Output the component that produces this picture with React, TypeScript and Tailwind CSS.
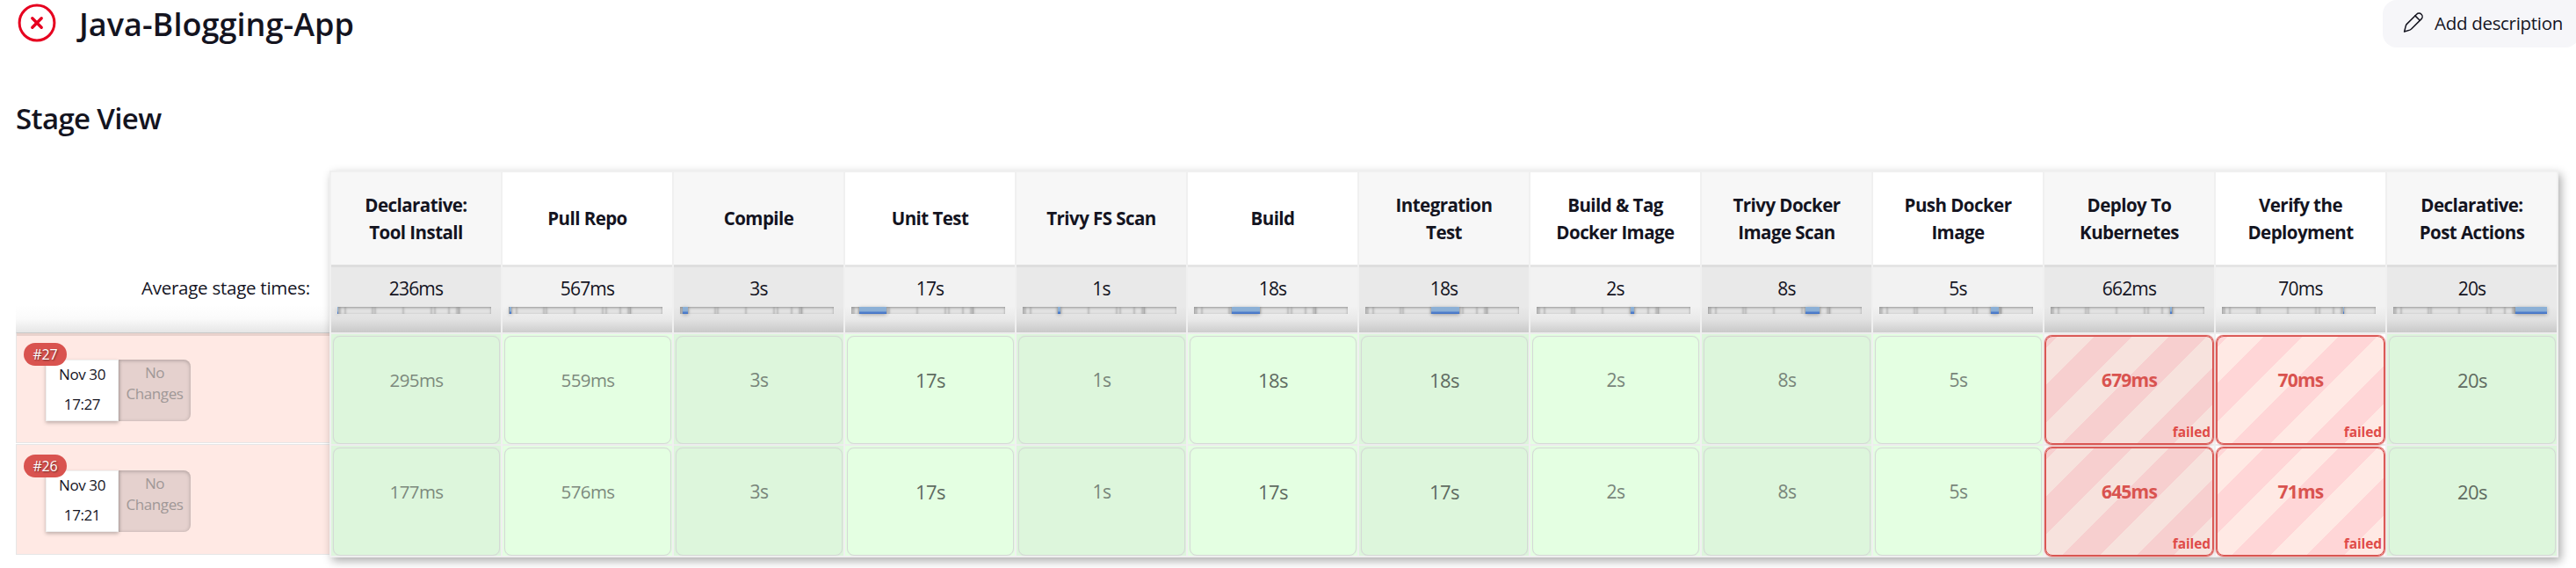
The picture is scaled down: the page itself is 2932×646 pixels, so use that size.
type Stage = { name: string[]; average: string; width: number };

const STAGES: Stage[] = [
  { name: ["Declarative:", "Tool Install"], average: "236ms", width: 1 },
  { name: ["Pull Repo"], average: "567ms", width: 2 },
  { name: ["Compile"], average: "3s", width: 6 },
  { name: ["Unit Test"], average: "17s", width: 31 },
  { name: ["Trivy FS Scan"], average: "1s", width: 3 },
  { name: ["Build"], average: "18s", width: 32 },
  { name: ["Integration", "Test"], average: "18s", width: 32 },
  { name: ["Build & Tag", "Docker Image"], average: "2s", width: 4 },
  { name: ["Trivy Docker", "Image Scan"], average: "8s", width: 16 },
  { name: ["Push Docker", "Image"], average: "5s", width: 9 },
  { name: ["Deploy To", "Kubernetes"], average: "662ms", width: 2 },
  { name: ["Verify the", "Deployment"], average: "70ms", width: 1 },
  { name: ["Declarative:", "Post Actions"], average: "20s", width: 36 },
];

type Run = { id: string; date: string; time: string; durations: string[] };

const RUNS: Run[] = [
  {
    id: "#27",
    date: "Nov 30",
    time: "17:27",
    durations: ["295ms", "559ms", "3s", "17s", "1s", "18s", "18s", "2s", "8s", "5s", "679ms", "70ms", "20s"],
  },
  {
    id: "#26",
    date: "Nov 30",
    time: "17:21",
    durations: ["177ms", "576ms", "3s", "17s", "1s", "17s", "17s", "2s", "8s", "5s", "645ms", "71ms", "20s"],
  },
];

const FAILED = [10, 11];

function FailedIcon() {
  return (
    <svg width="44" height="44" viewBox="0 0 44 44" fill="none" stroke="#e6001f" strokeWidth="3" className="shrink-0">
      <circle cx="22" cy="22" r="19.9" />
      <path d="M16.8 16.8l10.4 10.4M27.2 16.8L16.8 27.2" strokeWidth="3.4" strokeLinecap="round" />
    </svg>
  );
}

function PencilIcon() {
  return (
    <svg width="26" height="26" viewBox="0 0 26 26" fill="none" stroke="#14141f" strokeWidth="1.5" strokeLinejoin="round" strokeLinecap="round" className="shrink-0">
      <path d="M2.6 23l1.7-6.6q.3-1.2 1.1-2L16.6 3.2a3.8 3.8 0 0 1 5.4 5.4L10.8 19.8q-.8.8-2 1.3Z" />
      <path d="M14.9 4.9l5.4 5.4" />
    </svg>
  );
}

function TimeBar({ active }: { active: number }) {
  return (
    <div className="flex h-2 w-[175px] bg-[#e2e2e2]">
      {STAGES.map((stage, i) => (
        <div
          key={i}
          style={{ width: stage.width }}
          className={
            i === active
              ? "relative h-2 shrink-0 bg-linear-to-b from-[#8cb0d6] from-55% to-[#4676c8] to-85% shadow-[0_1px_4px_rgba(0,0,0,0.3)]"
              : "h-2 shrink-0 shadow-[inset_0_1px_3px_rgba(0,0,0,0.35)]"
          }
        />
      ))}
    </div>
  );
}

function Duration({ text }: { text: string }) {
  if (text.endsWith("ms")) return <span className="text-[20.5px] tracking-[-0.6px] text-[#7c897d]">{text}</span>;
  if (text.length > 2) return <span className="text-[22px] tracking-[-0.5px] text-[#5f6b61]">{text}</span>;
  return <span className="text-[21px] tracking-[-0.5px] text-[#78857a]">{text}</span>;
}

function StageCell({ text, column }: { text: string; column: number }) {
  const odd = column % 2 === 0;
  if (FAILED.includes(column)) {
    return (
      <div className={`h-[125px] pt-0.5 pr-px pl-px ${odd ? "bg-[#f7f7f7]" : "bg-white"}`}>
        <div
          className={`relative flex h-[123px] items-start justify-center rounded-lg border border-[#d9534f] pt-[34px] shadow-[0_0_1px_0.5px_#d9534f,0_1px_3px_rgba(217,83,79,0.6)] ${
            odd
              ? "bg-[repeating-linear-gradient(135deg,#f7cfcf_0_8.7px,#f7e2dd_8.7px_38.7px,#f7cfcf_38.7px_60px)]"
              : "bg-[repeating-linear-gradient(135deg,#ffd6d7_0_8px,#ffe9e4_8px_37px,#ffd6d7_37px_60px)]"
          }`}
        >
          <span className="text-[21px] leading-[31px] font-bold tracking-[-0.8px] text-[#d9534f]">{text}</span>
          <span className="absolute right-0.5 bottom-[3px] text-[15.5px] leading-[20px] font-bold tracking-[-0.1px] text-[#df4b48]">failed</span>
        </div>
      </div>
    );
  }
  return (
    <div className={`h-[125px] pt-0.5 pr-px pl-0.5 ${odd ? "bg-[#ddf6dc]" : "bg-[#e4ffe2]"}`}>
      <div className="flex h-[123px] items-start justify-center rounded-lg border border-[#d5d9d6] pt-[34px] leading-[31px] shadow-[0_0_1px_#cfcfd4]">
        <Duration text={text} />
      </div>
    </div>
  );
}

function RunLabel({ run, first }: { run: Run; first: boolean }) {
  return (
    <div
      className={`relative h-[126px] border-b border-l border-[#e6e6e6] bg-[#ffe9e4] pl-[33px] ${
        first ? "border-t border-t-[#c9c9c9] pt-[30px] shadow-[inset_0_3px_0_#e9d2cc]" : "border-t pt-[29px]"
      }`}
    >
      <div className="flex h-[70px]">
        <div className="relative flex w-[83px] flex-col border border-[#efefef] bg-white text-center text-[17px] tracking-[-0.4px] text-[#14141f] shadow-[0_2px_4px_rgba(0,0,0,0.25)]">
          <div className="leading-[31px]">{run.date}</div>
          <div className="leading-[37px]">{run.time}</div>
        </div>
        <div className="w-[82px] rounded-r-lg bg-[#e5d1ce] pt-[3px] text-center text-[17px] leading-[23.5px] tracking-[-0.4px] text-[#a09897] shadow-[inset_0_1px_4px_rgba(0,0,0,0.25)]">
          <div>No</div>
          <div>Changes</div>
        </div>
      </div>
      <div className="absolute top-[11px] left-2 flex h-[26px] w-[49px] items-center justify-center rounded-full bg-[#d9534f] text-[16px] tracking-[-0.2px] text-white [text-shadow:1px_1px_2px_rgba(0,0,0,0.5)]">
        {run.id}
      </div>
    </div>
  );
}

export default function App() {
  return (
    <div className="h-[646px] w-[2932px] overflow-hidden bg-white font-['Open_Sans','Noto_Sans',sans-serif] text-[#14141f]">
      <header className="flex h-[54px] items-start justify-between">
        <div className="flex h-[54px] items-center pb-0.5 pl-5">
          <FailedIcon />
          <h1 className="pt-1 pl-[26px] text-[36px] leading-[48px] font-semibold tracking-[0.05px]">Java-Blogging-App</h1>
        </div>
        <div className="-mr-1 flex h-[54px] w-[224px] items-center rounded-b-[16px] rounded-tl-[16px] bg-[#f6f6f9] pb-0.5 pl-[22px]">
          <PencilIcon />
          <span className="pl-[11px] text-[20.5px] leading-[30px] tracking-[-0.3px]">Add description</span>
        </div>
      </header>

      <h2 className="mt-[57px] ml-[18px] h-[83px] text-[33px] leading-[48px] font-semibold tracking-[-0.65px]">Stage View</h2>

      <main className="flex pl-[18px]">
        <div className="w-[357px] shrink-0">
          <div className="h-[107px]" />
          <div className="flex h-[77px] justify-end bg-[linear-gradient(to_bottom,#fff_60%,#fafafa_80%,#e6e6e6)] pt-[11px] pr-[22px] text-[20.5px] leading-[31px] tracking-[-0.25px]">
            Average stage times:
          </div>
          <RunLabel run={RUNS[0]} first />
          <div className="h-px" />
          <RunLabel run={RUNS[1]} first={false} />
        </div>

        <div className="relative flex h-[440px] w-[2537px] shrink-0 border-y-2 border-l-2 border-[#f0f0f0] shadow-[3px_4px_10px_rgba(0,0,0,0.33)]">
          {STAGES.map((stage, i) => {
            const odd = i % 2 === 0;
            return (
              <div key={i} className="w-[195px] shrink-0 border-r-2 border-[#f0f0f0]">
                <div
                  className={`flex h-[105px] flex-col items-center justify-center text-[20.5px] leading-[31px] font-bold tracking-[-0.55px] ${
                    odd ? "bg-[#f7f7f7]" : "bg-white"
                  }`}
                >
                  {stage.name.map((line) => (
                    <span key={line}>{line}</span>
                  ))}
                </div>
                <div
                  className={`flex h-[77px] flex-col items-start border-t-[3px] pl-[7px] ${
                    odd
                      ? "border-[#dedede] bg-[linear-gradient(to_bottom,#e9e9e9_60%,#e1e1e1_80%,#c9c9c9)]"
                      : "border-[#e5e5e5] bg-[linear-gradient(to_bottom,#f2f2f2_60%,#e9e9e9_80%,#cdcdcd)]"
                  }`}
                >
                  <span className="h-[45px] w-[179px] pt-[9px] text-center text-[21px] leading-[31px] tracking-[-0.8px]">
                    {stage.average}
                  </span>
                  <TimeBar active={i} />
                </div>
                {RUNS.map((run) => (
                  <div key={run.id} className="border-t-2 border-[#ededed]">
                    <StageCell text={run.durations[i]} column={i} />
                  </div>
                ))}
              </div>
            );
          })}
        </div>
      </main>
    </div>
  );
}
